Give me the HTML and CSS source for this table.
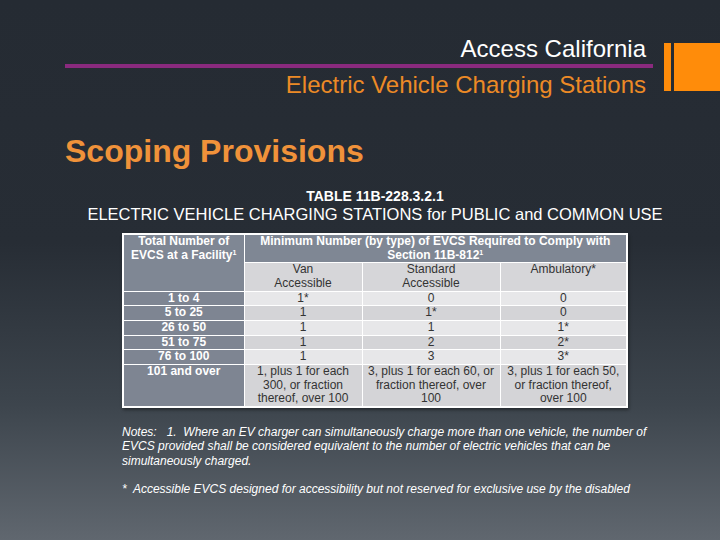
FILE: index.html
```html
<!DOCTYPE html>
<html>
<head>
<meta charset="utf-8">
<link rel="stylesheet" href="styles.css">
</head>
<body>
<div class="slide">
  <header class="top">
    <div class="titles">
      <div class="t1">Access California</div>
      <div class="rule"></div>
      <div class="t2">Electric Vehicle Charging Stations</div>
    </div>
    <div class="deco">
      <div class="deco-thin"></div>
      <div class="deco-block"></div>
    </div>
  </header>
  <h1 class="heading">Scoping Provisions</h1>
  <div class="caption">
    <div class="cap1">TABLE 11B-228.3.2.1</div>
    <div class="cap2">ELECTRIC VEHICLE CHARGING STATIONS for PUBLIC and COMMON USE</div>
  </div>
  <div class="table-wrap">
    <table class="evcs">
      <colgroup>
        <col class="c1"><col class="c2"><col class="c3"><col class="c4">
      </colgroup>
      <tr>
        <th rowspan="2" class="hd">Total Number of<br>EVCS at a Facility<sup>1</sup></th>
        <th colspan="3" class="hd">Minimum Number (by type) of EVCS Required to Comply with<br>Section 11B-812<sup>1</sup></th>
      </tr>
      <tr class="sub">
        <td>Van<br>Accessible</td>
        <td>Standard<br>Accessible</td>
        <td>Ambulatory*<br>&nbsp;</td>
      </tr>
      <tr class="lt"><th>1 to 4</th><td>1*</td><td>0</td><td>0</td></tr>
      <tr class="dk"><th>5 to 25</th><td>1</td><td>1*</td><td>0</td></tr>
      <tr class="lt"><th>26 to 50</th><td>1</td><td>1</td><td>1*</td></tr>
      <tr class="dk"><th>51 to 75</th><td>1</td><td>2</td><td>2*</td></tr>
      <tr class="lt"><th>76 to 100</th><td>1</td><td>3</td><td>3*</td></tr>
      <tr class="dk last">
        <th>101 and over</th>
        <td>1, plus 1 for each<br>300, or fraction<br>thereof, over 100</td>
        <td>3, plus 1 for each 60, or<br>fraction thereof, over<br>100</td>
        <td>3, plus 1 for each 50,<br>or fraction thereof,<br>over 100</td>
      </tr>
    </table>
  </div>
  <div class="notes">
    <p>Notes:&nbsp;&nbsp; 1.&nbsp; Where an EV charger can simultaneously charge more than one vehicle, the number of EVCS provided shall be considered equivalent to the number of electric vehicles that can be simultaneously charged.</p>
    <p class="star">*&nbsp; Accessible EVCS designed for accessibility but not reserved for exclusive use by the disabled</p>
  </div>
</div>
</body>
</html>
```

FILE: styles.css
```css
html, body {
  margin: 0;
  padding: 0;
}
body {
  width: 720px;
  height: 540px;
  overflow: hidden;
  font-family: "Liberation Sans", Arial, sans-serif;
  background: linear-gradient(180deg, #252b33 0%, #272d35 45%, #3d454d 75%, #60676f 100%);
}
.slide {
  width: 720px;
  height: 540px;
  display: flex;
  flex-direction: column;
}
.top {
  display: flex;
  align-items: flex-start;
  padding-top: 36px;
}
.titles {
  margin-left: 65px;
  width: 588px;
  display: flex;
  flex-direction: column;
  align-items: flex-end;
}
.t1 {
  color: #ffffff;
  font-size: 24px;
  line-height: 26px;
  padding-right: 7px;
}
.rule {
  align-self: stretch;
  height: 4px;
  background: #8a2a7e;
  margin-top: 2px;
}
.t2 {
  color: #ec8a26;
  font-size: 24px;
  line-height: 26px;
  margin-top: 4px;
  padding-right: 7px;
}
.deco {
  display: flex;
  margin-left: 11px;
  margin-top: 7px;
  height: 48px;
}
.deco-thin {
  width: 7px;
  background: #ff8c0a;
}
.deco-block {
  width: 46px;
  margin-left: 3px;
  background: #ff8c0a;
}
.heading {
  margin: 0;
  margin-left: 65px;
  margin-top: 35px;
  font-size: 32px;
  line-height: 36px;
  font-weight: bold;
  color: #f0923a;
}
.caption {
  margin-top: 19px;
  text-align: center;
  color: #ffffff;
  width: 750px;
}
.cap1 {
  font-size: 14px;
  font-weight: bold;
  line-height: 16px;
}
.cap2 {
  font-size: 16.5px;
  line-height: 18px;
  margin-top: 1px;
}
.table-wrap {
  margin-left: 122px;
  margin-top: 10px;
}
.evcs {
  border-collapse: collapse;
  border: 2px solid #ffffff;
  font-size: 12px;
  line-height: 13.65px;
  box-shadow: 1px 2px 3px rgba(0,0,0,0.4);
}
.c1 { width: 121px; }
.c2 { width: 118px; }
.c3 { width: 138px; }
.c4 { width: 127px; }
.evcs th, .evcs td {
  border: 1px solid #ffffff;
  padding: 0;
  text-align: center;
  vertical-align: top;
  white-space: nowrap;
}
.evcs th {
  background: #7e8592;
  color: #ffffff;
  font-weight: bold;
}
.evcs th.hd {
  background: #7f8794;
}
.evcs sup {
  font-size: 7px;
  line-height: 0;
  vertical-align: 4px;
}
.evcs td {
  color: #333333;
}
.sub td { background: #d6d6d9; }
.lt td { background: #e7e7e9; }
.dk td { background: #d4d4d7; }
.notes {
  margin-left: 122px;
  margin-top: 17px;
  width: 530px;
  color: #ffffff;
  font-style: italic;
  font-size: 12px;
  line-height: 14.5px;
}
.notes p {
  margin: 0;
}
.notes .star {
  margin-top: 14px;
}
```
